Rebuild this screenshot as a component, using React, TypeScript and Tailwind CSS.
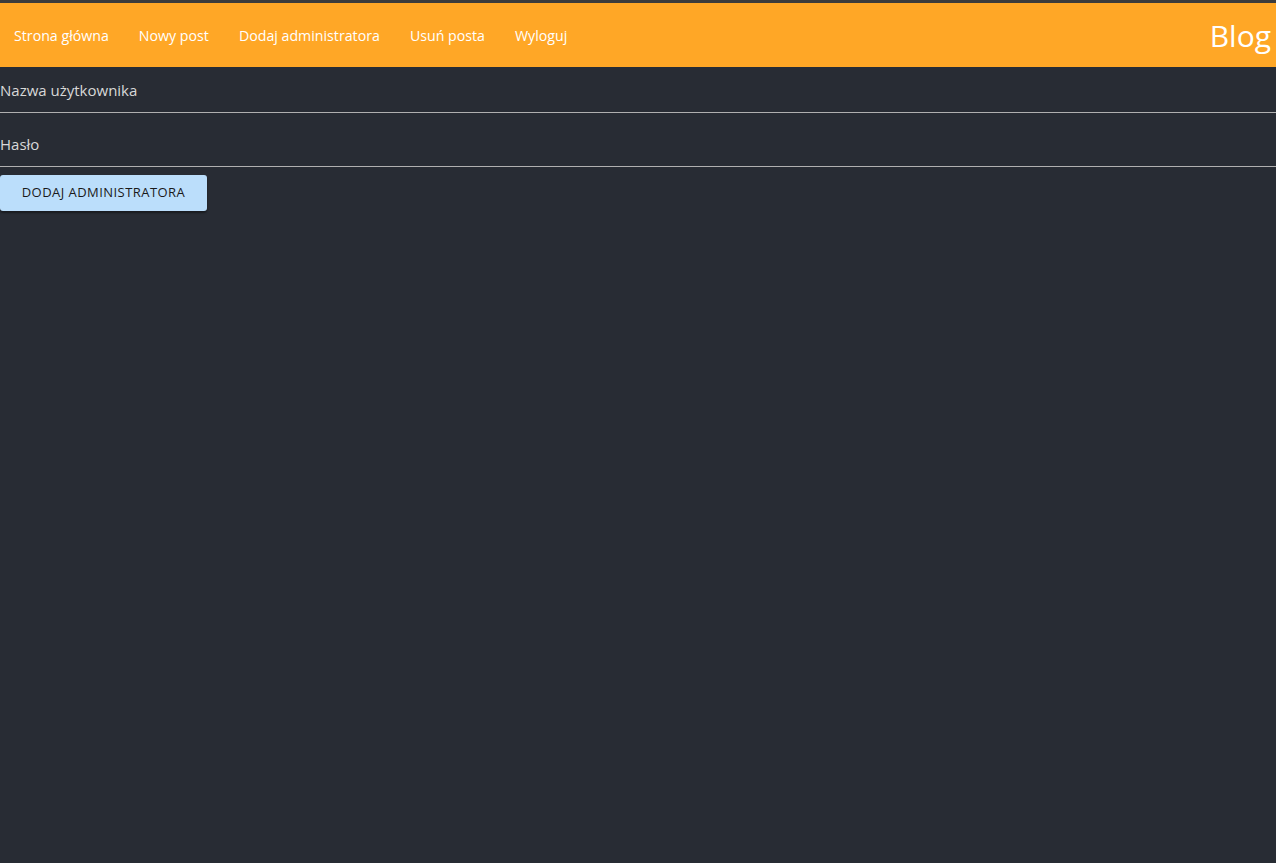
import React, { useState } from 'react';

const links = ['Strona główna', 'Nowy post', 'Dodaj administratora', 'Usuń posta', 'Wyloguj'];

const App: React.FC = () => {
  const [username, setUsername] = useState('');
  const [password, setPassword] = useState('');

  return (
    <div className="min-h-screen bg-[#282c34] border-t-[3px] border-[#3c3c3c] font-['Open_Sans',sans-serif]">
      <nav className="h-16 bg-[#ffa726] flex items-center justify-between">
        <div className="flex items-center gap-[30px] pl-[14px] pt-[2px]">
          {links.map(link => (
            <a key={link} href="#" className="text-white text-[14.2px]">
              {link}
            </a>
          ))}
        </div>
        <span className="text-white text-[30px] pr-[5px]">Blog</span>
      </nav>

      <form className="flex flex-col items-start" onSubmit={e => e.preventDefault()}>
        <input
          type="text"
          placeholder="Nazwa użytkownika"
          value={username}
          onChange={e => setUsername(e.target.value)}
          className="w-full h-[46px] bg-transparent border-b border-[#b0b0b0] text-[15px] text-[#e0e0e0] placeholder:text-[#d8d8d8] outline-none"
        />
        <input
          type="password"
          placeholder="Hasło"
          value={password}
          onChange={e => setPassword(e.target.value)}
          className="w-full h-[54px] pt-[8px] bg-transparent border-b border-[#b0b0b0] text-[15px] text-[#e0e0e0] placeholder:text-[#d8d8d8] outline-none"
        />
        <button
          type="submit"
          className="mt-[8px] w-[207px] h-[36px] bg-[#bbdefb] rounded-[3px] shadow-[0_2px_2px_rgba(0,0,0,0.4)] text-[13px] tracking-[0.45px] uppercase text-[#1a1a1a]"
        >
          Dodaj administratora
        </button>
      </form>
    </div>
  );
};

export default App;
